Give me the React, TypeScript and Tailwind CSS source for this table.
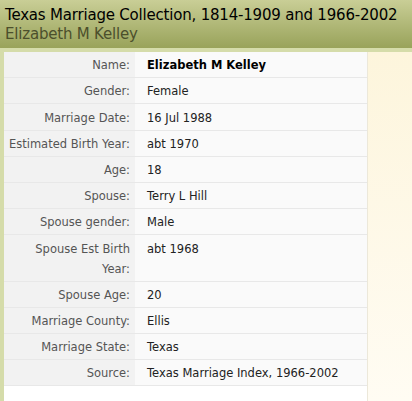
const rows: { label: string; value: string; bold?: boolean }[] = [
  { label: "Name:", value: "Elizabeth M Kelley", bold: true },
  { label: "Gender:", value: "Female" },
  { label: "Marriage Date:", value: "16 Jul 1988" },
  { label: "Estimated Birth Year:", value: "abt 1970" },
  { label: "Age:", value: "18" },
  { label: "Spouse:", value: "Terry L Hill" },
  { label: "Spouse gender:", value: "Male" },
  { label: "Spouse Est Birth Year:", value: "abt 1968" },
  { label: "Spouse Age:", value: "20" },
  { label: "Marriage County:", value: "Ellis" },
  { label: "Marriage State:", value: "Texas" },
  { label: "Source:", value: "Texas Marriage Index, 1966-2002" }
];

export default function App() {
  return (
    <div className="h-[401px] w-[412px] overflow-hidden bg-white font-['DejaVu_Sans',Verdana,sans-serif]">
      <div className="h-[48px] bg-gradient-to-b from-[#c9ce96] to-[#99a35a] px-[5px] pt-[6px]">
        <h1 className="whitespace-nowrap text-[15px] leading-[19px] tracking-[-0.2px] text-black">
          Texas Marriage Collection, 1814-1909 and 1966-2002
        </h1>
        <h2 className="whitespace-nowrap text-[15px] leading-[19px] tracking-[-0.2px] text-[#4c4f2c]">
          Elizabeth M Kelley
        </h2>
      </div>
      <div className="flex">
        <div className="w-[367px] border-l-[4px] border-t-[4px] border-[#d5dcaa]">
          <table className="w-full table-fixed border-collapse text-[11.5px]">
            <colgroup>
              <col className="w-[131px]" />
              <col />
            </colgroup>
            <tbody>
              {rows.map((row) => (
                <tr key={row.label} className="border-b border-[#e8e8e8]">
                  <td className="bg-[#f2f2f2] pb-[2px] pl-[2px] pr-[5px] pt-[3.2px] text-right align-top leading-[20px] text-[#555]">
                    {row.label}
                  </td>
                  <td
                    className={`bg-[#fafafa] pb-[2px] pl-[12px] pt-[3.2px] align-top leading-[20px] ${
                      row.bold ? "font-bold text-black" : "text-[#222]"
                    }`}
                  >
                    {row.value}
                  </td>
                </tr>
              ))}
            </tbody>
          </table>
        </div>
        <div className="flex-1 border-t-[4px] border-[#d5dcaa]">
          <div className="h-[349px] border-l border-[#ece8da] bg-gradient-to-b from-[#fdf5dc] to-[#fffcf3]" />
        </div>
      </div>
    </div>
  );
}
